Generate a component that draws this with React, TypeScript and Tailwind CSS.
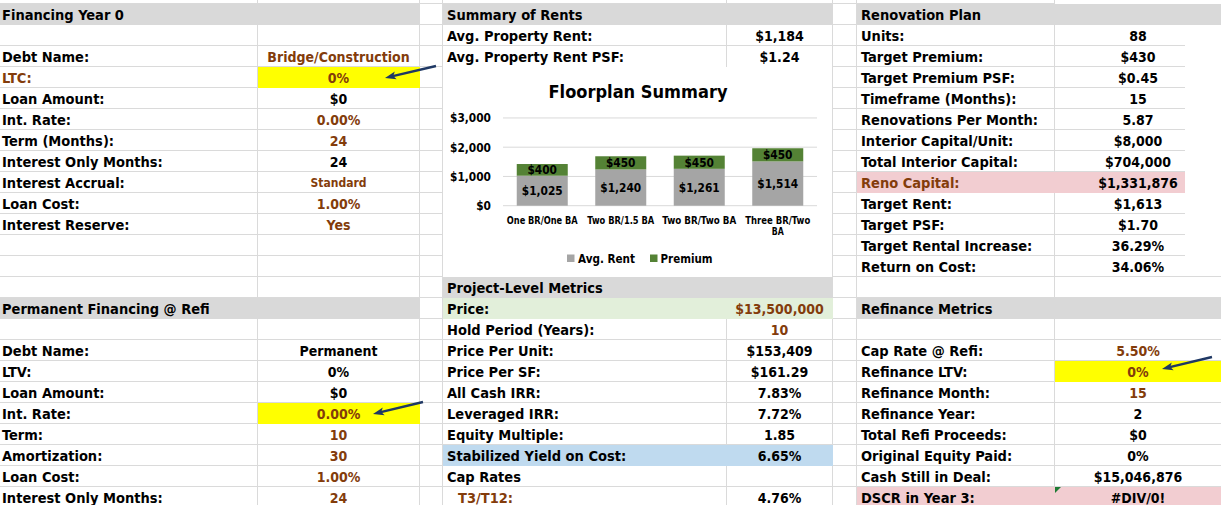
import React from "react";

type Fill = { bg: string; bd: string };
const YEL: Fill = { bg: "bg-[#ffff00]", bd: "border-[#ffff00]" };
const GRN: Fill = { bg: "bg-[#e2efda]", bd: "border-[#e2efda]" };
const BLU: Fill = { bg: "bg-[#bfdaef]", bd: "border-[#bfdaef]" };
const PNK: Fill = { bg: "bg-[#f2cdd1]", bd: "border-[#f2cdd1]" };

type R =
  | { k: "h"; t: string }
  | { k: "e" }
  | { k: "c" }
  | { k: "s" }
  | {
      k: "r";
      l: string;
      v?: string;
      lb?: boolean;
      vb?: boolean;
      fill?: Fill;
      vfill?: Fill;
      small?: boolean;
      indent?: boolean;
      tri?: boolean;
      nb?: boolean;
    };

const BR = "text-[#833c0b]";
const GL = "border-[#dadada]";
const TXT = "whitespace-nowrap pt-[2px] leading-[18px] text-[14.5px]";
const VTXT = "whitespace-nowrap pt-[2px] leading-[18px] text-[14px]";

const left: R[] = [
  { k: "h", t: "Financing Year 0" },
  { k: "e" },
  { k: "r", l: "Debt Name:", v: "Bridge/Construction", vb: true },
  { k: "r", l: "LTC:", v: "0%", lb: true, vb: true, vfill: YEL },
  { k: "r", l: "Loan Amount:", v: "$0" },
  { k: "r", l: "Int. Rate:", v: "0.00%", vb: true },
  { k: "r", l: "Term (Months):", v: "24", vb: true },
  { k: "r", l: "Interest Only Months:", v: "24" },
  { k: "r", l: "Interest Accrual:", v: "Standard", vb: true, small: true },
  { k: "r", l: "Loan Cost:", v: "1.00%", vb: true },
  { k: "r", l: "Interest Reserve:", v: "Yes", vb: true },
  { k: "e" },
  { k: "e" },
  { k: "e" },
  { k: "h", t: "Permanent Financing @ Refi" },
  { k: "e" },
  { k: "r", l: "Debt Name:", v: "Permanent" },
  { k: "r", l: "LTV:", v: "0%" },
  { k: "r", l: "Loan Amount:", v: "$0" },
  { k: "r", l: "Int. Rate:", v: "0.00%", vb: true, vfill: YEL },
  { k: "r", l: "Term:", v: "10", vb: true },
  { k: "r", l: "Amortization:", v: "30", vb: true },
  { k: "r", l: "Loan Cost:", v: "1.00%", vb: true },
  { k: "r", l: "Interest Only Months:", v: "24", vb: true },
];

const middle: R[] = [
  { k: "h", t: "Summary of Rents" },
  { k: "r", l: "Avg. Property Rent:", v: "$1,184" },
  { k: "r", l: "Avg. Property Rent PSF:", v: "$1.24", nb: true },
  { k: "c" },
  { k: "s" },
  { k: "s" },
  { k: "s" },
  { k: "s" },
  { k: "s" },
  { k: "s" },
  { k: "s" },
  { k: "s" },
  { k: "s" },
  { k: "h", t: "Project-Level Metrics" },
  { k: "r", l: "Price:", v: "$13,500,000", vb: true, fill: GRN },
  { k: "r", l: "Hold Period (Years):", v: "10", vb: true },
  { k: "r", l: "Price Per Unit:", v: "$153,409" },
  { k: "r", l: "Price Per SF:", v: "$161.29" },
  { k: "r", l: "All Cash IRR:", v: "7.83%" },
  { k: "r", l: "Leveraged IRR:", v: "7.72%" },
  { k: "r", l: "Equity Multiple:", v: "1.85" },
  { k: "r", l: "Stabilized Yield on Cost:", v: "6.65%", fill: BLU },
  { k: "r", l: "Cap Rates", v: "" },
  { k: "r", l: "T3/T12:", v: "4.76%", lb: true, indent: true },
];

const right: R[] = [
  { k: "h", t: "Renovation Plan" },
  { k: "r", l: "Units:", v: "88" },
  { k: "r", l: "Target Premium:", v: "$430" },
  { k: "r", l: "Target Premium PSF:", v: "$0.45" },
  { k: "r", l: "Timeframe (Months):", v: "15" },
  { k: "r", l: "Renovations Per Month:", v: "5.87" },
  { k: "r", l: "Interior Capital/Unit:", v: "$8,000" },
  { k: "r", l: "Total Interior Capital:", v: "$704,000" },
  { k: "r", l: "Reno Capital:", v: "$1,331,876", lb: true, fill: PNK },
  { k: "r", l: "Target Rent:", v: "$1,613" },
  { k: "r", l: "Target PSF:", v: "$1.70" },
  { k: "r", l: "Target Rental Increase:", v: "36.29%" },
  { k: "r", l: "Return on Cost:", v: "34.06%" },
  { k: "e" },
  { k: "h", t: "Refinance Metrics" },
  { k: "e" },
  { k: "r", l: "Cap Rate @ Refi:", v: "5.50%", vb: true },
  { k: "r", l: "Refinance LTV:", v: "0%", vb: true, vfill: YEL },
  { k: "r", l: "Refinance Month:", v: "15", vb: true },
  { k: "r", l: "Refinance Year:", v: "2" },
  { k: "r", l: "Total Refi Proceeds:", v: "$0" },
  { k: "r", l: "Original Equity Paid:", v: "0%" },
  { k: "r", l: "Cash Still in Deal:", v: "$15,046,876" },
  { k: "r", l: "DSCR in Year 3:", v: "#DIV/0!", fill: PNK, tri: true },
];

const FF = "'DejaVu Sans Condensed', 'DejaVu Sans', sans-serif";

function Chart() {
  const y0 = 138.7;
  const k = 0.02925;
  const data = [
    { n: [["One BR/One BA", 71]], r: 1025, p: 400 },
    { n: [["Two BR/1.5 BA", 67]], r: 1240, p: 450 },
    { n: [["Two BR/Two BA", 74]], r: 1261, p: 450 },
    { n: [["Three BR/Two", 65], ["BA", 12]], r: 1514, p: 450 },
  ] as { n: [string, number][]; r: number; p: number }[];
  const ticks = [0, 1000, 2000, 3000];
  return (
    <svg width="389" height="210" fontFamily={FF} fontWeight="bold">
      <text
        x="195"
        y="30.8"
        fontSize="16.8"
        textAnchor="middle"
        fill="#000"
        textLength="179"
        lengthAdjust="spacingAndGlyphs"
      >
        Floorplan Summary
      </text>
      {ticks.map((t) => {
        const y = y0 - t * k;
        return (
          <g key={t}>
            <line x1="60" x2="374" y1={y} y2={y} stroke="#d9d9d9" strokeWidth="1" />
            <text x="48" y={y + 4.3} fontSize="11.8" textAnchor="end" fill="#000">
              {"$" + t.toLocaleString("en-US")}
            </text>
          </g>
        );
      })}
      {data.map((d, i) => {
        const x = 60 + 78.5 * i + 13.75;
        const hr = d.r * k;
        const hp = d.p * k;
        const cx = x + 25.5;
        return (
          <g key={i}>
            <rect x={x} y={y0 - hr} width="51" height={hr} fill="#a5a5a5" />
            <rect x={x} y={y0 - hr - hp} width="51" height={hp} fill="#548235" />
            <text x={cx} y={y0 - hr / 2 + 4.6} fontSize="11.8" textAnchor="middle" fill="#000">
              {"$" + d.r.toLocaleString("en-US")}
            </text>
            <text x={cx} y={y0 - hr - hp / 2 + 4.4} fontSize="11.8" textAnchor="middle" fill="#000">
              {"$" + d.p.toLocaleString("en-US")}
            </text>
            {d.n.map(([line, w], j) => (
              <text
                key={j}
                x={cx}
                y={157.3 + j * 11}
                fontSize="11.3"
                textAnchor="middle"
                fill="#000"
                textLength={w}
                lengthAdjust="spacingAndGlyphs"
              >
                {line}
              </text>
            ))}
          </g>
        );
      })}
      <rect x="124" y="187.5" width="7.5" height="7.5" fill="#a5a5a5" />
      <text x="135" y="195.7" fontSize="12.5" fill="#000" textLength="57" lengthAdjust="spacingAndGlyphs">
        Avg. Rent
      </text>
      <rect x="207" y="187.5" width="7.5" height="7.5" fill="#548235" />
      <text x="217.5" y="195.7" fontSize="12.5" fill="#000" textLength="52" lengthAdjust="spacingAndGlyphs">
        Premium
      </text>
    </svg>
  );
}

function Arrow({ x1, y1, x2, y2 }: { x1: number; y1: number; x2: number; y2: number }) {
  const dx = x2 - x1;
  const dy = y2 - y1;
  const len = Math.hypot(dx, dy);
  const ux = dx / len;
  const uy = dy / len;
  const hl = 11;
  const hw = 4;
  const bx = x2 - ux * hl;
  const by = y2 - uy * hl;
  const nx = -uy;
  const ny = ux;
  const pts = `${x2},${y2} ${bx + nx * hw},${by + ny * hw} ${bx + ux * 2.5},${by + uy * 2.5} ${bx - nx * hw},${by - ny * hw}`;
  return (
    <g>
      <line x1={x1} y1={y1} x2={bx + ux * 3} y2={by + uy * 3} stroke="#1f3864" strokeWidth="2.4" />
      <polygon points={pts} fill="#1f3864" />
    </g>
  );
}

function leftCells(r: R, i: number) {
  const key = "l" + i;
  if (r.k === "h")
    return [
      <div key={key} className={"col-span-2 bg-[#d9d9d9] pl-[2px] " + TXT}>
        {r.t}
      </div>,
    ];
  if (r.k === "e")
    return [
      <div key={key + "a"} className={"border-r border-b " + GL} />,
      <div key={key + "b"} className={"border-r border-b " + GL} />,
    ];
  if (r.k !== "r") return [];
  const lf = r.fill;
  const vf = r.vfill || r.fill;
  return [
    <div
      key={key + "a"}
      className={
        "border-r border-b pl-[2px] " + TXT + " " + (lf ? lf.bg + " " + lf.bd : GL) + " " + (r.lb ? BR : "")
      }
    >
      {r.l}
    </div>,
    <div
      key={key + "b"}
      className={
        "border-r border-b text-center " +
        (r.small ? "text-[12px] pt-[3px] leading-[17px] whitespace-nowrap" : VTXT) +
        " " +
        (vf ? vf.bg + " " + vf.bd : GL) +
        " " +
        (r.vb ? BR : "")
      }
    >
      {r.v}
    </div>,
  ];
}

function middleCells(r: R, i: number) {
  const key = "m" + i;
  if (r.k === "h")
    return [
      <div key={key} className={"col-span-2 bg-[#d9d9d9] pl-[4px] " + TXT}>
        {r.t}
      </div>,
    ];
  if (r.k === "c")
    return [
      <div key={key} className={"col-span-2 row-span-10 bg-white border-r " + GL}>
        <Chart />
      </div>,
    ];
  if (r.k === "s") return [];
  if (r.k === "e")
    return [
      <div key={key + "a"} className={"border-r border-b " + GL} />,
      <div key={key + "b"} className={"border-r border-b " + GL} />,
    ];
  const f = r.fill;
  const b = r.nb ? "border-r" : "border-r border-b";
  return [
    <div
      key={key + "a"}
      className={
        b + " " + (r.indent ? "pl-[15px] " : "pl-[4px] ") + TXT + " " + (f ? f.bg + " " + f.bd : GL) + " " + (r.lb ? BR : "")
      }
    >
      {r.l}
    </div>,
    <div
      key={key + "b"}
      className={b + " text-center " + VTXT + " " + (f ? f.bg + " " + f.bd : GL) + " " + (r.vb ? BR : "")}
    >
      {r.v}
    </div>,
  ];
}

function rightCells(r: R, i: number) {
  const key = "r" + i;
  const top = i >= 1 && i <= 12;
  if (r.k === "h")
    return [
      <div key={key} className={"col-span-3 bg-[#d9d9d9] pl-[4px] " + TXT}>
        {r.t}
      </div>,
    ];
  if (r.k === "e")
    return [
      <div key={key + "a"} className={"border-r border-b " + GL} />,
      <div key={key + "b"} className={"col-span-2 border-b " + GL} />,
    ];
  if (r.k !== "r") return [];
  const f = r.fill;
  const vf = r.vfill || r.fill;
  const label = (
    <div
      key={key + "a"}
      className={"border-r border-b pl-[4px] " + TXT + " " + (f ? f.bg + " " + f.bd : GL) + " " + (r.lb ? BR : "")}
    >
      {r.l}
    </div>
  );
  if (top) {
    return [
      label,
      <div
        key={key + "b"}
        className={"border-b pl-[36px] text-center " + VTXT + " " + (vf ? vf.bg + " " + vf.bd : GL) + " " + (r.vb ? BR : "")}
      >
        {r.v}
      </div>,
      <div key={key + "c"} className={i === 12 ? "border-b " + GL : ""} />,
    ];
  }
  return [
    label,
    <div
      key={key + "b"}
      className={
        "relative col-span-2 border-b text-center " + VTXT + " " + (vf ? vf.bg + " " + vf.bd : GL) + " " + (r.vb ? BR : "")
      }
    >
      {r.tri && (
        <span className="absolute left-0 top-0 w-0 h-0 border-t-[6px] border-r-[6px] border-t-[#1e7b34] border-r-transparent" />
      )}
      {r.v}
    </div>,
  ];
}

export default function App() {
  const cells: React.ReactNode[] = [];
  cells.push(
    <div key="z1" className={"border-r border-b " + GL} />,
    <div key="z2" className={"border-r border-b " + GL} />,
    <div key="z3" className={"border-r border-b " + GL} />,
    <div key="z4" className={"border-r border-b " + GL} />,
    <div key="z5" className={"border-r border-b " + GL} />,
    <div key="z6" className={"border-r border-b " + GL} />,
    <div key="z7" className={"border-r border-b " + GL} />,
    <div key="z8" className="col-span-2" />
  );
  for (let i = 0; i < 24; i++) {
    cells.push(...leftCells(left[i], i));
    cells.push(<div key={"c" + i} className={"border-r border-b " + GL} />);
    cells.push(...middleCells(middle[i], i));
    cells.push(<div key={"f" + i} className={"border-r border-b " + GL} />);
    cells.push(...rightCells(right[i], i));
  }
  return (
    <div className="relative w-[1221px] h-[505px] overflow-hidden bg-white text-black font-bold text-[14px] font-['DejaVu_Sans_Condensed','DejaVu_Sans',sans-serif]">
      <div className="grid grid-cols-[258px_162px_23px_284px_106px_24px_198px_130px_36px] grid-rows-[4px_repeat(24,21px)]">
        {cells}
      </div>
      <svg className="absolute inset-0 pointer-events-none" width="1221" height="505">
        <Arrow x1={436} y1={66} x2={385} y2={78} />
        <Arrow x1={423} y1={402} x2={373} y2={414} />
        <Arrow x1={1212} y1={357} x2={1162} y2={369} />
      </svg>
    </div>
  );
}
